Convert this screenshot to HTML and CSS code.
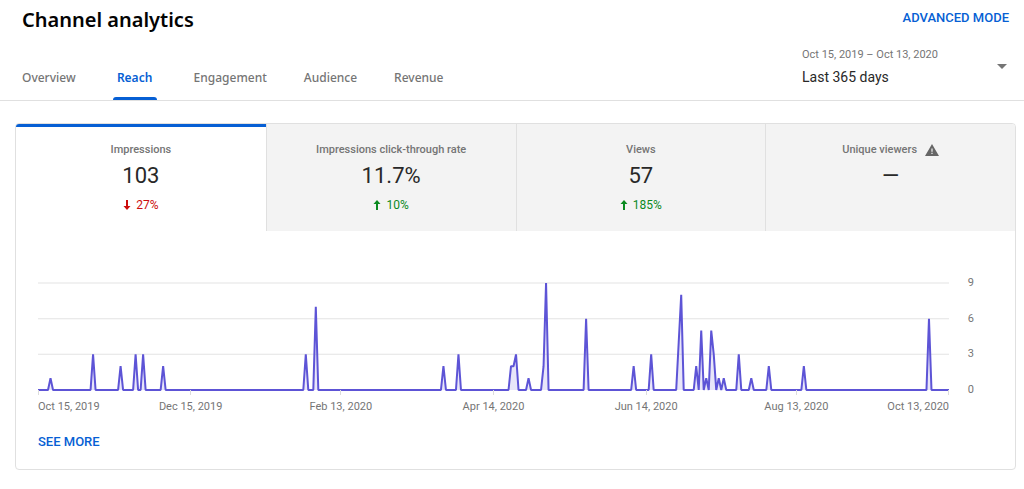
FILE: index.html
```html
<!DOCTYPE html>
<html lang="en">
<head>
<meta charset="utf-8">
<title>Channel analytics</title>
<link rel="stylesheet" href="styles.css">
</head>
<body>
<header class="header">
  <div class="header-main">
    <h1 class="title">Channel analytics</h1>
    <nav class="tabs">
      <a class="tab" href="#overview">Overview</a>
      <a class="tab active" href="#reach" aria-current="page">Reach</a>
      <a class="tab" href="#engagement">Engagement</a>
      <a class="tab" href="#audience">Audience</a>
      <a class="tab" href="#revenue">Revenue</a>
    </nav>
  </div>
  <div class="header-side">
    <button class="link-button" type="button">ADVANCED MODE</button>
    <button class="period" type="button" aria-haspopup="listbox">
      <span class="period-text">
        <span class="period-range">Oct 15, 2019 – Oct 13, 2020</span>
        <span class="period-name">Last 365 days</span>
      </span>
      <svg class="caret" viewBox="0 0 10 5" aria-hidden="true"><path d="M0 0h10L5 5z"/></svg>
    </button>
  </div>
</header>
<main class="card">
  <div class="metrics">
    <button class="metric selected" type="button">
      <span class="metric-label">Impressions</span>
      <span class="metric-value">103</span>
      <span class="metric-change down">
        <svg class="arrow" viewBox="0 0 8 10" aria-hidden="true"><path d="M3 0h2v6h2.5L4 10 .5 6H3z"/></svg>27%
      </span>
    </button>
    <button class="metric" type="button">
      <span class="metric-label">Impressions click-through rate</span>
      <span class="metric-value">11.7%</span>
      <span class="metric-change up">
        <svg class="arrow" viewBox="0 0 8 10" aria-hidden="true"><path d="M3 10h2V4h2.500L4 0 .5 4H3z"/></svg>10%
      </span>
    </button>
    <button class="metric" type="button">
      <span class="metric-label">Views</span>
      <span class="metric-value">57</span>
      <span class="metric-change up">
        <svg class="arrow" viewBox="0 0 8 10" aria-hidden="true"><path d="M3 10h2V4h2.500L4 0 .5 4H3z"/></svg>185%
      </span>
    </button>
    <button class="metric" type="button">
      <span class="metric-label">Unique viewers
        <svg class="warning" viewBox="0 0 14 12" aria-hidden="true"><path fill-rule="evenodd" d="M7 0l7 12H0zM6.400 4.500v3.200h1.200V4.500zM6.400 8.800V10h1.200V8.800z"/></svg>
      </span>
      <span class="metric-value">—</span>
    </button>
  </div>
  <div class="chart">
    <div class="plot">
      <svg class="plot-svg" viewBox="0 0 364 9" preserveAspectRatio="none" role="img" aria-label="Impressions per day">
        <path class="grid-line" d="M0 0H364M0 3H364M0 6H364"/>
        <path class="series" d="M0 9H4L5 8L6 9H21L22 6L23 9H32L33 7L34 9H38L39 6L40 9H41L42 6L43 9H49L50 7L51 9H106L107 6L108 9H110L111 2L112 9H161L162 7L163 9H167L168 6L169 9H188L189 7H190L191 6L192 9H195L196 8L197 9H201L202 7L203 0L204 9H218L219 3L220 9H237L238 7L239 9H244L245 6L246 9H255L256 5L257 1L258 9H262L263 7L264 9L265 4L266 9L267 8L268 9L269 4L270 6L271 9L272 8L273 9L274 8L275 9H279L280 6L281 9H284L285 8L286 9H291L292 7L293 9H305L306 7L307 9H355L356 3L357 9H364"/>
      </svg>
    </div>
    <div class="y-axis"><span>9</span><span>6</span><span>3</span><span>0</span></div>
    <div class="x-axis">
      <span class="date first">Oct 15, 2019</span>
      <span class="date">Dec 15, 2019</span>
      <span class="date">Feb 13, 2020</span>
      <span class="date">Apr 14, 2020</span>
      <span class="date">Jun 14, 2020</span>
      <span class="date">Aug 13, 2020</span>
      <span class="date last">Oct 13, 2020</span>
    </div>
  </div>
  <button class="link-button see-more" type="button">SEE MORE</button>
</main>
</body>
</html>
```
FILE: styles.css
```css
* { box-sizing: border-box; }
body {
  margin: 0;
  background: #fff;
  color: #282828;
  font-family: Roboto, "Liberation Sans", sans-serif;
}
button {
  margin: 0;
  padding: 0;
  border: 0;
  background: none;
  color: inherit;
  font: inherit;
  text-align: left;
  cursor: pointer;
}
svg { display: block; }

.header {
  display: flex;
  justify-content: space-between;
  border-bottom: 1px solid #e0e0e0;
}
.header-main, .header-side {
  display: flex;
  flex-direction: column;
  justify-content: space-between;
}
.header-main { padding-left: 22px; }
.title {
  margin: 0;
  padding-top: 6px;
  color: #030303;
  font: 600 20px/28px "Noto Sans", sans-serif;
}
.tabs { display: flex; gap: 37px; }
.tab {
  min-width: 44px;
  padding: 12px 0 11px;
  border-bottom: 3px solid transparent;
  color: #757575;
  font: 500 12px/17px "Noto Sans", sans-serif;
  text-align: center;
  text-decoration: none;
}
.tab.active {
  position: relative;
  color: #065fd4;
  font-weight: 600;
}
.tab.active::after {
  content: "";
  position: absolute;
  inset: auto 0 -3px;
  height: 3px;
  border-radius: 3px 3px 0 0;
  background: #065fd4;
}
.header-side {
  width: 222px;
  padding: 8px 15px 13px 0;
}
.link-button {
  align-self: flex-end;
  color: #065fd4;
  font-size: 13px;
  font-weight: 500;
  line-height: 20px;
}
.period {
  display: flex;
  align-items: center;
  justify-content: space-between;
  padding: 18px 2px 0 0;
}
.period-text { display: flex; flex-direction: column; gap: 3px; }
.period-range { color: #757575; font-size: 11px; line-height: 18px; }
.period-name { font-size: 14px; line-height: 20px; }
.caret { width: 10px; height: 5px; fill: #757575; }

.card {
  margin: 22px 8px 20px 15px;
  border: 1px solid #e0e0e0;
  border-radius: 4px;
}
.metrics { display: grid; grid-template-columns: repeat(4, 1fr); }
.metric {
  display: flex;
  flex-direction: column;
  align-items: center;
  height: 107px;
  padding-top: 18px;
  border-left: 1px solid #e0e0e0;
  background: #f3f3f3;
}
.metric:last-child { border-top-right-radius: 3px; }
.metric.selected {
  padding-top: 15px;
  border-left: 0;
  border-top: 3px solid #065fd4;
  border-top-left-radius: 3px;
  background: #fff;
}
.metric-label {
  display: flex;
  align-items: center;
  gap: 8px;
  color: #757575;
  font-size: 11px;
  font-weight: 500;
  line-height: 16px;
}
.warning { width: 14px; height: 12px; fill: #666; }
.metric-value { font-size: 22px; line-height: 36px; }
.metric-change {
  display: flex;
  align-items: center;
  gap: 5px;
  padding-top: 2px;
  font-size: 12px;
  line-height: 18px;
}
.arrow { width: 8px; height: 10px; fill: currentColor; }
.up { color: #0a8a1f; }
.down { color: #cc0c0c; }

.chart {
  display: grid;
  grid-template-columns: 1fr 20px;
  column-gap: 5px;
  padding: 52px 41px 0 22px;
}
.plot { height: 107px; }
.plot-svg { width: 100%; height: 100%; overflow: visible; }
.plot-svg path { vector-effect: non-scaling-stroke; }
.grid-line { fill: none; stroke: #e3e3e3; stroke-width: 1px; }
.series {
  fill: rgba(90, 80, 210, 0.14);
  stroke: #5d54d6;
  stroke-width: 2px;
  stroke-linejoin: miter;
  stroke-miterlimit: 1;
}
.y-axis {
  display: flex;
  flex-direction: column;
  justify-content: space-between;
  align-items: flex-end;
  margin: -8px 0;
  color: #757575;
  font-size: 11px;
  line-height: 16px;
}
.x-axis {
  display: grid;
  grid-template-columns:
    minmax(0, 61fr) minmax(0, 60fr) minmax(0, 61fr)
    minmax(0, 61fr) minmax(0, 60fr) minmax(0, 61fr) 0;
  color: #757575;
  font-size: 11px;
  line-height: 16px;
}
.date {
  display: flex;
  flex-direction: column;
  align-items: center;
  gap: 4px;
  width: 0;
  white-space: nowrap;
}
.date::before {
  content: "";
  width: 1px;
  height: 5px;
  background: #dcdcdc;
}
.date.first { align-items: flex-start; }
.date.last { align-items: flex-end; }
.see-more { display: block; margin: 17px 22px; }
```
